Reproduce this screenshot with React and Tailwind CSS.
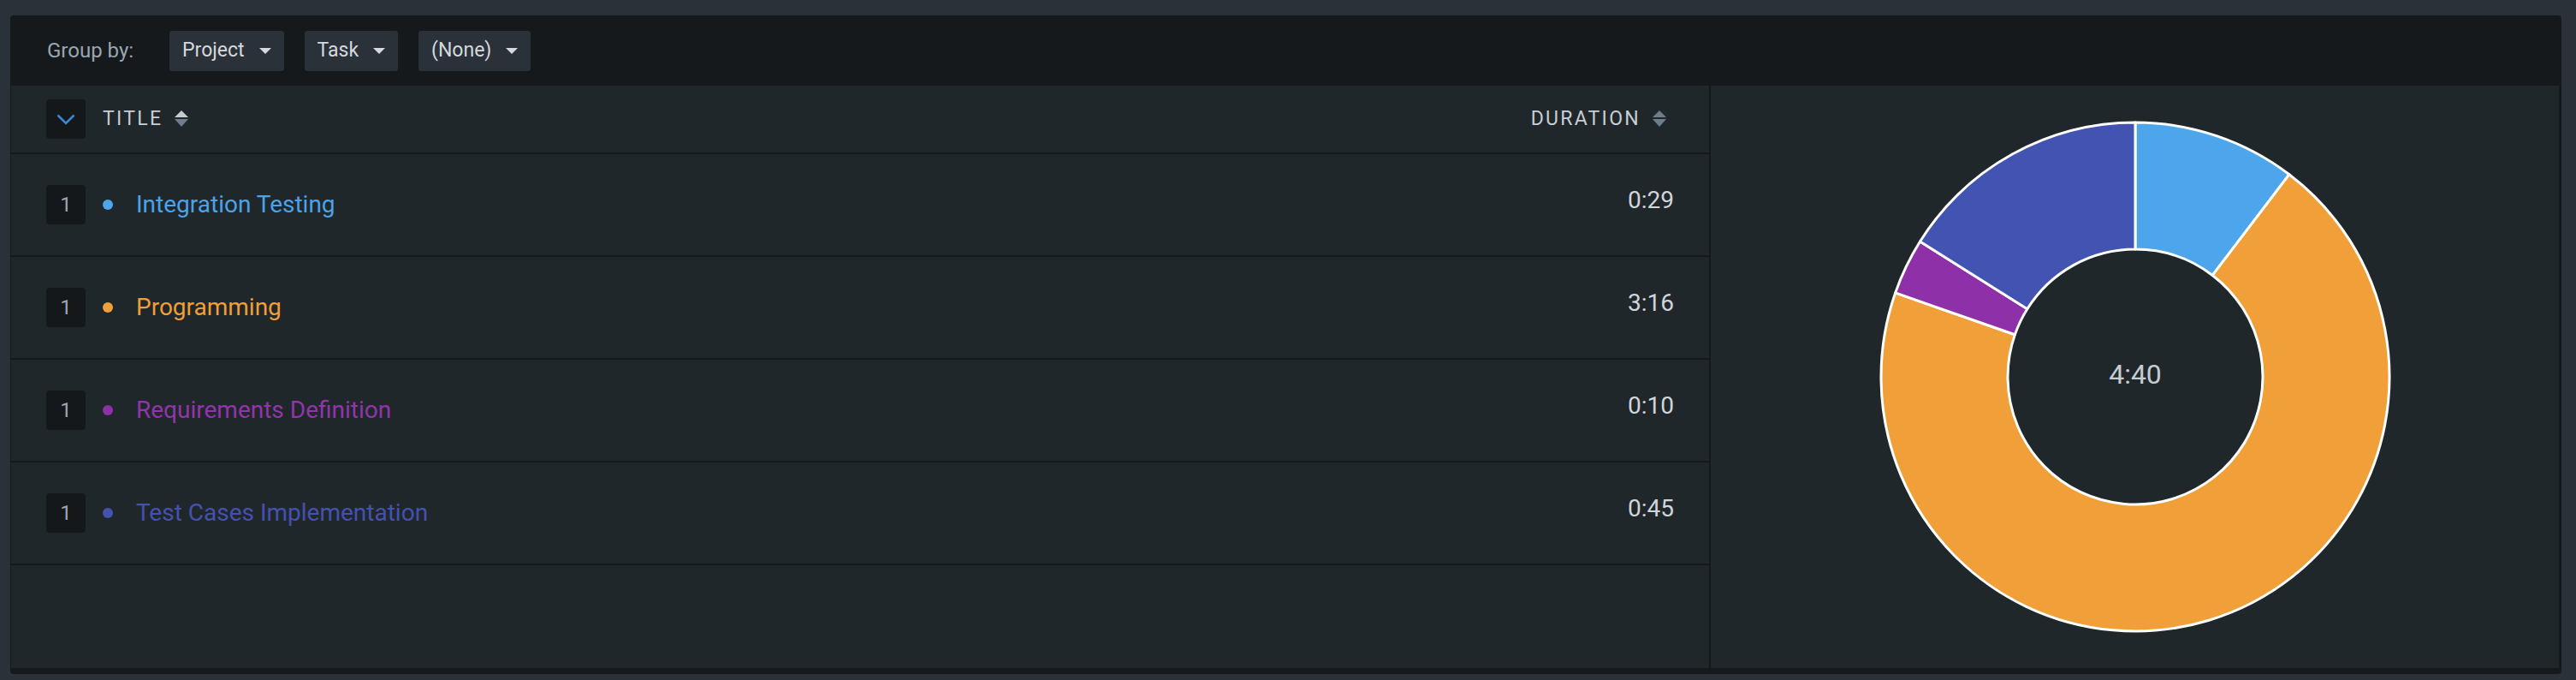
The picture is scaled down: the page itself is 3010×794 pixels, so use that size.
const rows = [
  { title: "Integration Testing", minutes: 29, text: "text-[#4aa3e8]", dot: "bg-[#4da6ec]", fill: "#4da6ec" },
  { title: "Programming", minutes: 196, text: "text-[#f09e38]", dot: "bg-[#f1a039]", fill: "#f1a039" },
  { title: "Requirements Definition", minutes: 10, text: "text-[#9135aa]", dot: "bg-[#8e30a8]", fill: "#8e30a8" },
  { title: "Test Cases Implementation", minutes: 45, text: "text-[#4551b0]", dot: "bg-[#4353b1]", fill: "#4353b1" },
];

const fmt = (m) => `${Math.floor(m / 60)}:${String(m % 60).padStart(2, "0")}`;

function Caret() {
  return (
    <svg width="14" height="7" viewBox="0 0 14 7">
      <path d="M0 0 H14 L7 7 Z" fill="#d5d9de" />
    </svg>
  );
}

function SortIcon({ active }) {
  return (
    <svg width="16" height="20" viewBox="0 0 16 20">
      <path d="M8 0 L16 8 H0 Z" fill={active ? "#c5cbd1" : "#6d7d89"} />
      <path d="M0 10 H16 L8 19 Z" fill="#6d7d89" />
    </svg>
  );
}

function Dropdown({ label }) {
  return (
    <button className="flex h-[47px] items-center gap-[17px] rounded-[3px] bg-[#2a3138] pl-[15px] pr-[15px] text-[23px] text-[#d5d9de]">
      <span>{label}</span>
      <Caret />
    </button>
  );
}

function arc(cx, cy, ro, ri, a0, a1) {
  const p = (r, a) => {
    const t = ((a - 90) * Math.PI) / 180;
    return `${cx + r * Math.cos(t)} ${cy + r * Math.sin(t)}`;
  };
  const large = a1 - a0 > 180 ? 1 : 0;
  return `M${p(ro, a0)} A${ro} ${ro} 0 ${large} 1 ${p(ro, a1)} L${p(ri, a1)} A${ri} ${ri} 0 ${large} 0 ${p(ri, a0)} Z`;
}

function Donut() {
  const total = rows.reduce((s, r) => s + r.minutes, 0);
  let a = 0;
  return (
    <svg width="620" height="620" viewBox="0 0 620 620">
      {rows.map((r) => {
        const a0 = a;
        a += (r.minutes / total) * 360;
        return (
          <path
            key={r.title}
            d={arc(310, 310, 297, 149, a0, a)}
            fill={r.fill}
            stroke="#ffffff"
            strokeWidth="3"
            strokeLinejoin="round"
          />
        );
      })}
      <text
        x="310"
        y="307"
        textAnchor="middle"
        dominantBaseline="central"
        fill="#c5ccd2"
        fontSize="32"
        fontFamily="Roboto, sans-serif"
      >
        {fmt(total)}
      </text>
    </svg>
  );
}

export default function App() {
  return (
    <div className="h-[794px] bg-[#2a3139] pb-[7px] pl-[12px] pr-[17px] pt-[18px] font-['Roboto',sans-serif]">
      <div className="flex h-[769px] flex-col rounded-[4px] bg-[#15191c] pb-[7px] pl-[1px] pr-[3px]">
        <div className="flex h-[82px] shrink-0 items-center pl-[42px]">
          <span className="text-[24px] text-[#9aa6b2]">Group by:</span>
          <div className="ml-[42px] flex gap-[24px]">
            <Dropdown label="Project" />
            <Dropdown label="Task" />
            <Dropdown label="(None)" />
          </div>
        </div>

        <div className="flex flex-1 bg-[#20272b]">
          <div className="flex w-[1986px] flex-col border-r-2 border-[#15191c]">
            <div className="flex h-[80px] shrink-0 items-center border-b-2 border-[#15191c] pl-[41px] pr-[50px]">
              <button className="flex h-[46px] w-[46px] items-center justify-center rounded-[4px] bg-[#14181b]">
                <svg width="22" height="13" viewBox="0 0 22 13">
                  <path d="M1.5 1.5 L11 11 L20.5 1.5" fill="none" stroke="#3d86d1" strokeWidth="2.6" />
                </svg>
              </button>
              <span className="ml-[20px] text-[23px] uppercase tracking-[2.3px] text-[#c8ced5]">Title</span>
              <span className="ml-[14px]">
                <SortIcon active />
              </span>
              <span className="ml-auto text-[23px] uppercase tracking-[2.3px] text-[#c8ced5]">Duration</span>
              <span className="ml-[14px]">
                <SortIcon />
              </span>
            </div>

            {rows.map((r) => (
              <div
                key={r.title}
                className="flex h-[120px] shrink-0 items-center border-b-2 border-[#15191c] pl-[41px] pr-[41px]"
              >
                <span className="flex h-[46px] w-[46px] items-center justify-center rounded-[4px] bg-[#14181b] text-[24px] text-[#9ca5ae]">
                  1
                </span>
                <span className={`ml-[20px] h-[12px] w-[12px] rounded-full ${r.dot}`} />
                <span className={`ml-[27px] text-[28px] ${r.text}`}>{r.title}</span>
                <span className="ml-auto pb-[10px] text-[28px] text-[#d0d5da]">{fmt(r.minutes)}</span>
              </div>
            ))}
          </div>

          <div className="flex flex-1 items-center justify-center">
            <Donut />
          </div>
        </div>
      </div>
    </div>
  );
}
